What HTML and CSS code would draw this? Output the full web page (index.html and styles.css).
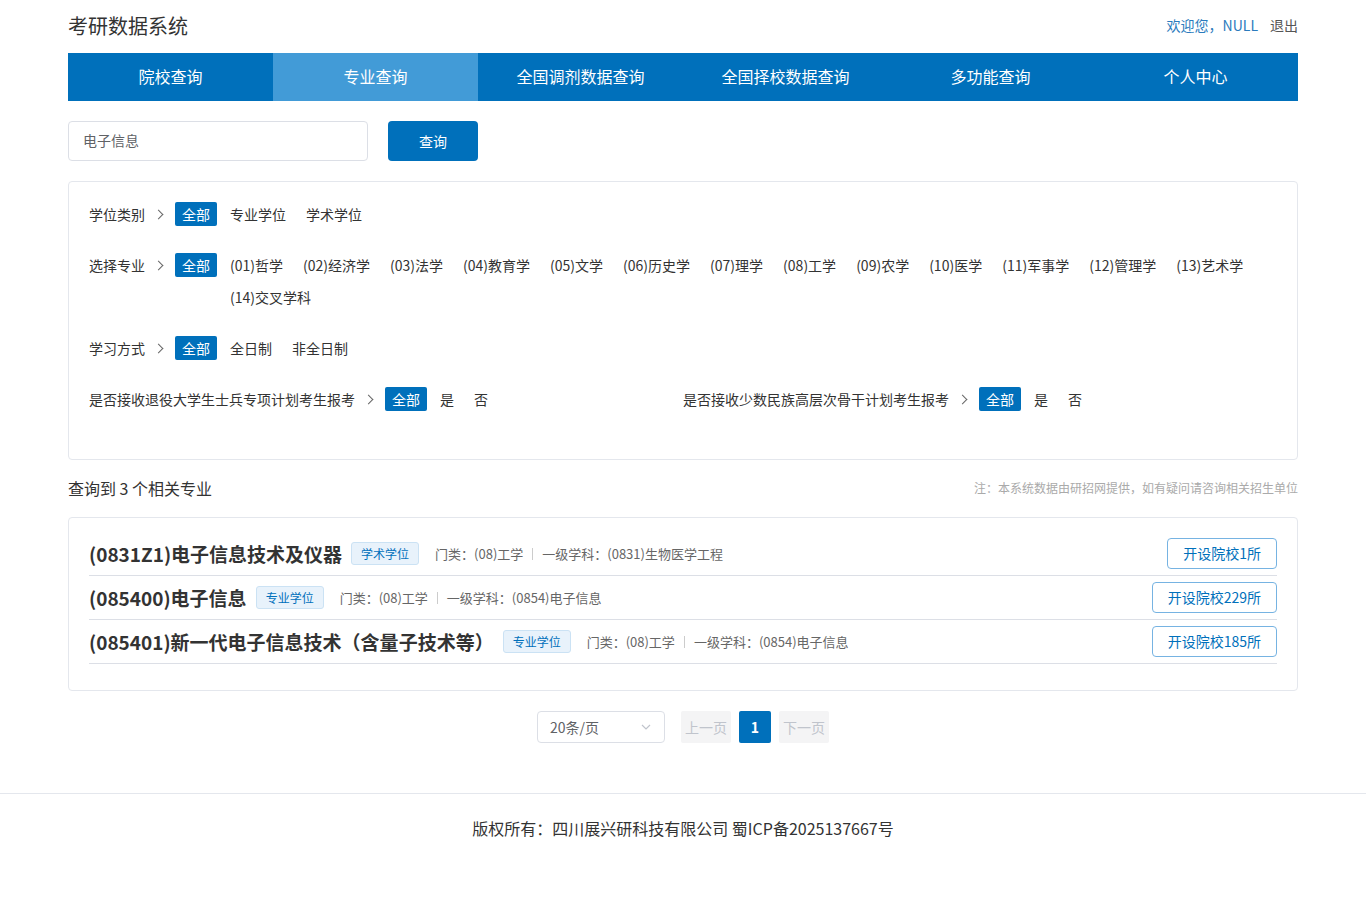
FILE: index.html
```html
<!DOCTYPE html>
<html lang="zh-CN">
<head>
    <meta charset="UTF-8">
    <meta name="viewport" content="width=device-width, initial-scale=1.0">
    <title>考研数据系统 - 专业查询</title>
    <link rel="stylesheet" href="styles.css">
</head>
<body>
    <div class="container">
        <div class="header">
            <div class="logo">考研数据系统</div>
            <div class="user">
                <span class="welcome">欢迎您，NULL</span>
                <a class="logout" href="#">退出</a>
            </div>
        </div>

        <div class="nav">
            <a href="#" class="nav-item">院校查询</a>
            <a href="#" class="nav-item active">专业查询</a>
            <a href="#" class="nav-item">全国调剂数据查询</a>
            <a href="#" class="nav-item">全国择校数据查询</a>
            <a href="#" class="nav-item">多功能查询</a>
            <a href="#" class="nav-item">个人中心</a>
        </div>

        <div class="search">
            <input class="search-input" type="text" value="电子信息">
            <button class="search-btn">查询</button>
        </div>

        <div class="filters">
            <div class="filter-row">
                <div class="filter-label">学位类别<span class="arrow"></span></div>
                <span class="opt active">全部</span>
                <div class="filter-options">
                    <span class="opt">专业学位</span>
                    <span class="opt">学术学位</span>
                </div>
            </div>
            <div class="filter-row">
                <div class="filter-label">选择专业<span class="arrow"></span></div>
                <span class="opt active">全部</span>
                <div class="filter-options">
                    <span class="opt">(01)哲学</span>
                    <span class="opt">(02)经济学</span>
                    <span class="opt">(03)法学</span>
                    <span class="opt">(04)教育学</span>
                    <span class="opt">(05)文学</span>
                    <span class="opt">(06)历史学</span>
                    <span class="opt">(07)理学</span>
                    <span class="opt">(08)工学</span>
                    <span class="opt">(09)农学</span>
                    <span class="opt">(10)医学</span>
                    <span class="opt">(11)军事学</span>
                    <span class="opt">(12)管理学</span>
                    <span class="opt">(13)艺术学</span>
                    <span class="opt">(14)交叉学科</span>
                </div>
            </div>
            <div class="filter-row">
                <div class="filter-label">学习方式<span class="arrow"></span></div>
                <span class="opt active">全部</span>
                <div class="filter-options">
                    <span class="opt">全日制</span>
                    <span class="opt">非全日制</span>
                </div>
            </div>
            <div class="filter-row split">
                <div class="filter-half">
                    <div class="filter-label">是否接收退役大学生士兵专项计划考生报考<span class="arrow"></span></div>
                    <span class="opt active">全部</span>
                    <div class="filter-options">
                        <span class="opt">是</span>
                        <span class="opt">否</span>
                    </div>
                </div>
                <div class="filter-half">
                    <div class="filter-label">是否接收少数民族高层次骨干计划考生报考<span class="arrow"></span></div>
                    <span class="opt active">全部</span>
                    <div class="filter-options">
                        <span class="opt">是</span>
                        <span class="opt">否</span>
                    </div>
                </div>
            </div>
        </div>

        <div class="result-head">
            <div class="result-count">查询到 3 个相关专业</div>
            <div class="result-note">注：本系统数据由研招网提供，如有疑问请咨询相关招生单位</div>
        </div>

        <div class="result-list">
            <div class="major">
                <div class="major-info">
                    <span class="major-name">(0831Z1)电子信息技术及仪器</span>
                    <span class="tag">学术学位</span>
                    <span class="meta">门类：(08)工学<i class="sep"></i>一级学科：(0831)生物医学工程</span>
                </div>
                <a href="#" class="school-btn">开设院校1所</a>
            </div>
            <div class="major">
                <div class="major-info">
                    <span class="major-name">(085400)电子信息</span>
                    <span class="tag">专业学位</span>
                    <span class="meta">门类：(08)工学<i class="sep"></i>一级学科：(0854)电子信息</span>
                </div>
                <a href="#" class="school-btn">开设院校229所</a>
            </div>
            <div class="major">
                <div class="major-info">
                    <span class="major-name">(085401)新一代电子信息技术（含量子技术等）</span>
                    <span class="tag">专业学位</span>
                    <span class="meta">门类：(08)工学<i class="sep"></i>一级学科：(0854)电子信息</span>
                </div>
                <a href="#" class="school-btn">开设院校185所</a>
            </div>
        </div>

        <div class="pager">
            <div class="page-size">
                <span>20条/页</span>
                <svg width="12" height="12" viewBox="0 0 12 12"><path d="M2 4l4 4 4-4" fill="none" stroke="#c0c4cc" stroke-width="1.2"/></svg>
            </div>
            <span class="page-btn disabled">上一页</span>
            <span class="page-num current">1</span>
            <span class="page-btn disabled">下一页</span>
        </div>
    </div>

    <div class="footer">版权所有：四川展兴研科技有限公司 蜀ICP备2025137667号</div>
</body>
</html>
```

FILE: styles.css
```css
* {
    box-sizing: border-box;
}

body {
    margin: 0;
    background-color: #fff;
    color: #333;
    font-family: "Noto Sans CJK SC", "Microsoft YaHei", sans-serif;
    font-size: 14px;
}

a {
    text-decoration: none;
}

.container {
    width: 1230px;
    margin: 0 auto;
}

/* header */
.header {
    height: 53px;
    display: flex;
    justify-content: space-between;
    align-items: center;
    padding-bottom: 2px;
}

.logo {
    font-size: 20px;
    color: #333;
}

.user {
    font-size: 14px;
    display: flex;
    gap: 12px;
    padding-bottom: 2px;
}

.welcome {
    color: #2b7bbd;
}

.logout {
    color: #555;
}

/* nav */
.nav {
    display: grid;
    grid-template-columns: repeat(6, 1fr);
    background-color: #0070bb;
    height: 48px;
}

.nav-item {
    display: flex;
    justify-content: center;
    align-items: center;
    color: #fff;
    font-size: 16px;
    padding-bottom: 2px;
}

.nav-item.active {
    background-color: #429bd7;
}

/* search */
.search {
    display: flex;
    gap: 20px;
    margin-top: 20px;
}

.search-input {
    width: 300px;
    height: 40px;
    border: 1px solid #dcdfe6;
    border-radius: 4px;
    padding: 0 14px 2px;
    font-family: inherit;
    font-size: 14px;
    color: #606266;
    outline: none;
}

.search-btn {
    width: 90px;
    height: 40px;
    border: none;
    border-radius: 4px;
    background-color: #0070bb;
    color: #fff;
    font-family: inherit;
    font-size: 14px;
    padding-bottom: 2px;
}

/* filters */
.filters {
    margin-top: 20px;
    border: 1px solid #e4e7ed;
    border-radius: 4px;
    padding: 16px 20px 33px;
}

.filter-row {
    display: flex;
    align-items: flex-start;
    margin-bottom: 19px;
}

.filter-row:last-child {
    margin-bottom: 11px;
}

.filter-row.split {
    display: grid;
    grid-template-columns: 1fr 1fr;
}

.filter-half {
    display: flex;
    align-items: flex-start;
}

.filter-label {
    display: flex;
    align-items: center;
    height: 32px;
    color: #333;
    white-space: nowrap;
    margin-right: 10px;
}

.arrow {
    width: 7px;
    height: 7px;
    border-top: 1px solid #666;
    border-right: 1px solid #666;
    transform: rotate(45deg);
    margin-left: 10px;
    margin-right: 3px;
}

.filter-options {
    display: flex;
    flex-wrap: wrap;
    flex: 1;
}

.opt {
    height: 32px;
    line-height: 32px;
    padding: 0 7px;
    margin-right: 6px;
    color: #333;
    white-space: nowrap;
    cursor: pointer;
}

.opt.active {
    height: 24px;
    line-height: 24px;
    margin-top: 4px;
    background-color: #0070bb;
    color: #fff;
    border-radius: 2px;
}

/* results */
.result-head {
    display: flex;
    justify-content: space-between;
    align-items: center;
    height: 57px;
    padding-bottom: 2px;
}

.result-count {
    font-size: 16px;
    color: #333;
}

.result-note {
    font-size: 12px;
    color: #aaa;
}

.result-list {
    border: 1px solid #e4e7ed;
    border-radius: 4px;
    padding: 14px 20px 26px;
}

.major {
    display: flex;
    justify-content: space-between;
    align-items: center;
    height: 44px;
    border-bottom: 1px solid #dcdfe6;
}

.major-info {
    display: flex;
    align-items: center;
}

.major-name {
    font-size: 19px;
    font-weight: bold;
    color: #333;
}

.tag {
    margin-left: 9px;
    padding: 0 9px;
    height: 23px;
    line-height: 21px;
    border: 1px solid #cbe2f4;
    border-radius: 3px;
    background-color: #e8f2fb;
    color: #0070bb;
    font-size: 12px;
}

.meta {
    margin-left: 16px;
    font-size: 13px;
    color: #666;
    display: flex;
    align-items: center;
}

.sep {
    display: inline-block;
    width: 1px;
    height: 12px;
    background-color: #ccc;
    margin: 0 9px;
}

.school-btn {
    height: 31px;
    line-height: 29px;
    padding: 0 15px;
    border: 1px solid #76b3e2;
    border-radius: 4px;
    color: #0070bb;
    font-size: 14px;
}

/* pagination */
.pager {
    display: flex;
    justify-content: center;
    align-items: center;
    margin-top: 20px;
    margin-bottom: 50px;
}

.page-size {
    width: 128px;
    height: 32px;
    border: 1px solid #dcdfe6;
    border-radius: 4px;
    display: flex;
    justify-content: space-between;
    align-items: center;
    padding: 0 12px;
    color: #606266;
    margin-right: 16px;
}

.page-btn {
    height: 32px;
    line-height: 32px;
    padding: 0 4px;
    background-color: #f4f4f5;
    color: #c0c4cc;
    border-radius: 2px;
}

.page-num {
    width: 32px;
    height: 32px;
    line-height: 32px;
    text-align: center;
    margin: 0 8px;
    border-radius: 2px;
    font-weight: bold;
}

.page-num.current {
    background-color: #0070bb;
    color: #fff;
}

/* footer */
.footer {
    border-top: 1px solid #e4e7ed;
    text-align: center;
    font-size: 16px;
    color: #333;
    padding-top: 22px;
    height: 80px;
}
```
